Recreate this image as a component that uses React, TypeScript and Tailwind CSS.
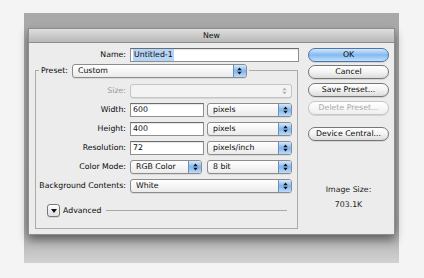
import React from "react";

function Arrows({ disabled }: { disabled?: boolean }) {
  const c = disabled ? "#b5b5b5" : "#111";
  return (
    <svg width="5" height="8" viewBox="0 0 5 8">
      <polygon points="0.3,3.3 2.5,0.6 4.7,3.3" fill={c} />
      <polygon points="0.3,4.7 2.5,7.4 4.7,4.7" fill={c} />
    </svg>
  );
}

function Select({ w, text, disabled }: { w: string; text?: string; disabled?: boolean }) {
  return (
    <div
      className={
        "flex h-[14px] items-stretch overflow-hidden rounded-[3px] border shadow-[0_1px_0_rgba(0,0,0,0.08)] " +
        (disabled ? "border-[#c4c4c4] bg-[#f3f3f3] " : "border-[#8c8c8c] bg-gradient-to-b from-white to-[#ebebeb] ") +
        w
      }
    >
      <div className="flex flex-1 items-center pl-[5px] text-[#0a0a0a]">{text}</div>
      {disabled ? (
        <div className="flex w-[13px] items-center justify-center">
          <Arrows disabled />
        </div>
      ) : (
        <div className="flex w-[13px] items-center justify-center border-l border-[#6d8fb8] bg-gradient-to-b from-[#d8eafc] via-[#7fb5ee] to-[#bcdcfa]">
          <Arrows />
        </div>
      )}
    </div>
  );
}

function Field({ w, children }: { w: string; children?: React.ReactNode }) {
  return (
    <div
      className={
        "flex h-[14px] items-center border border-[#8f8f8f] border-t-[#6c6c6c] bg-white pl-[2px] text-[#0a0a0a] shadow-[inset_0_1px_1px_rgba(0,0,0,0.1)] " +
        w
      }
    >
      {children}
    </div>
  );
}

function Btn({ children, kind }: { children: React.ReactNode; kind?: "ok" | "disabled" }) {
  const cls =
    kind === "ok"
      ? "border-[#4c76a8] bg-gradient-to-b from-[#d2e7fc] via-[#83baf0] to-[#c2e0fc] text-[#0a0a0a]"
      : kind === "disabled"
      ? "border-[#c6c6c6] bg-gradient-to-b from-white to-[#efefef] text-[#a9a9a9]"
      : "border-[#777] bg-gradient-to-b from-white via-[#f3f3f3] to-[#dcdcdc] text-[#0a0a0a]";
  return (
    <div className={"flex h-[14px] w-[81px] items-center justify-center rounded-full border shadow-[0_1px_0_rgba(0,0,0,0.1)] " + cls}>
      {children}
    </div>
  );
}

function Row({ label, children, disabled }: { label: string; children: React.ReactNode; disabled?: boolean }) {
  return (
    <div className="flex h-[14px] items-center gap-[4px]">
      <div className={"w-[90px] text-right " + (disabled ? "text-[#9a9a9a]" : "text-[#0a0a0a]")}>{label}</div>
      {children}
    </div>
  );
}

export default function App() {
  return (
    <div className="h-[278px] w-[424px] bg-[#f4f4f4] pl-[24px] pt-[13px] font-['DejaVu_Sans',sans-serif] text-[7.8px] leading-none">
      <div className="h-[250px] w-[375px] bg-gradient-to-b from-[#a9a9a9] via-[#a6a6a6] via-85% to-[#d2d2d2] px-[4px] pt-[15px]">
        <div className="flex h-[207px] w-[367px] flex-col border border-[#8d8d8d] bg-[#ececec] shadow-[0_5px_9px_rgba(0,0,0,0.45)]">
          <div className="flex h-[14px] items-center justify-center border-b border-[#8e8e8e] bg-gradient-to-b from-[#dedede] to-[#b9b9b9] text-[#111]">
            New
          </div>
          <div className="flex flex-1">
            <div className="ml-[6px] flex w-[264px] flex-col pt-[5px]">
              <div className="flex h-[14px] items-center gap-[4px]">
                <div className="w-[91px] text-right text-[#0a0a0a]">Name:</div>
                <Field w="w-[169px]">
                  <span className="bg-[#b6d4f6] px-[1px] py-[2px]">Untitled-1</span>
                </Field>
              </div>
              <div className="mt-[8px] flex h-[159px] w-[263px] flex-col border border-[#ababab]">
                <div className="-mt-[7px] ml-[3px] flex h-[14px] w-fit items-center gap-[4px] bg-[#ececec] px-[2px]">
                  <span className="text-[#0a0a0a]">Preset:</span>
                  <Select w="w-[175px]" text="Custom" />
                </div>
                <div className="mt-[6px] flex flex-col gap-[5px]">
                  <Row label="Size:" disabled>
                    <Select w="w-[162px]" disabled />
                  </Row>
                  <Row label="Width:">
                    <Field w="w-[74px]">600</Field>
                    <Select w="w-[85px] -ml-[1px]" text="pixels" />
                  </Row>
                  <Row label="Height:">
                    <Field w="w-[74px]">400</Field>
                    <Select w="w-[85px] -ml-[1px]" text="pixels" />
                  </Row>
                  <Row label="Resolution:">
                    <Field w="w-[74px]">72</Field>
                    <Select w="w-[85px] -ml-[1px]" text="pixels/inch" />
                  </Row>
                  <Row label="Color Mode:">
                    <Select w="w-[72px]" text="RGB Color" />
                    <Select w="w-[85px] ml-[1px]" text="8 bit" />
                  </Row>
                  <Row label="Background Contents:">
                    <Select w="w-[162px]" text="White" />
                  </Row>
                </div>
                <div className="mt-[11px] flex items-center pl-[11px] pr-[10px]">
                  <div className="flex h-[13px] w-[13px] items-center justify-center rounded-[3px] border border-[#777] bg-gradient-to-b from-white to-[#dedede] shadow-[0_1px_0_rgba(0,0,0,0.1)]">
                    <svg width="6" height="4" viewBox="0 0 6 4">
                      <polygon points="0,0 6,0 3,4" fill="#111" />
                    </svg>
                  </div>
                  <span className="ml-[3px] text-[#0a0a0a]">Advanced</span>
                  <div className="ml-[4px] h-px flex-1 bg-[#a8a8a8]" />
                </div>
              </div>
            </div>
            <div className="ml-[9px] flex flex-col pt-[5px]">
              <Btn kind="ok">OK</Btn>
              <div className="mt-[3px]">
                <Btn>Cancel</Btn>
              </div>
              <div className="mt-[4px]">
                <Btn>Save Preset...</Btn>
              </div>
              <div className="mt-[4px]">
                <Btn kind="disabled">Delete Preset...</Btn>
              </div>
              <div className="mt-[12px]">
                <Btn>Device Central...</Btn>
              </div>
              <div className="mt-[45px] flex w-[81px] flex-col items-center gap-[7px] text-[#1a1a1a]">
                <span>Image Size:</span>
                <span>703.1K</span>
              </div>
            </div>
          </div>
        </div>
      </div>
    </div>
  );
}
